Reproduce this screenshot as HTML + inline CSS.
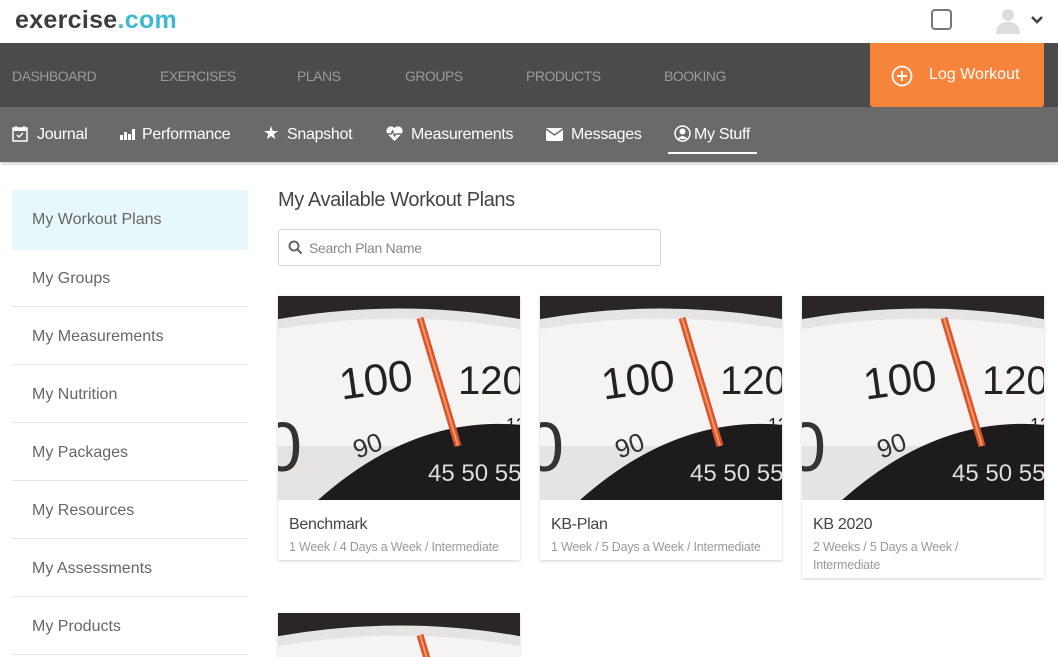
<!DOCTYPE html>
<html style="overflow:hidden;height:657px"><head><meta charset="utf-8"><style>
*{margin:0;padding:0;box-sizing:border-box}
body{width:1058px;height:657px;overflow:hidden;background:#fff;font-family:"Liberation Sans",sans-serif;position:relative}
.abs{position:absolute}
.logo{left:15px;top:6px;font-size:25px;font-weight:bold;color:#3d3d3d;letter-spacing:0.3px}
.logo span{color:#3fb8d4}
.nav{left:0;top:43px;width:1058px;height:64px;background:#4b4b4b}
.nav a{position:absolute;top:25px;font-size:14px;color:#9a9a9a;letter-spacing:-0.5px}
.btn{left:870px;top:43px;width:174px;height:64px;background:#f6843a;border-radius:0 0 3px 3px;color:#fff;font-size:16px}
.sub{left:0;top:107px;width:1058px;height:55px;background:#6a6a6a;box-shadow:0 2px 3px rgba(0,0,0,.2)}
.sub div{position:absolute;top:19px;font-size:16px;color:#fff;letter-spacing:-0.3px}
.side{left:12px;width:236px;height:58px;border-bottom:1px solid #e6e6e6;font-size:16px;color:#666;padding:21px 0 0 20px}
.card{width:242px;background:#fff;box-shadow:0 1px 3px rgba(0,0,0,.18)}
.card .t{padding:11px 11px 0;font-size:16px;color:#444;letter-spacing:-0.3px}
.card .m{padding:4px 11px 0;font-size:12.5px;color:#999;line-height:18px;letter-spacing:-0.2px}
</style></head><body>
<div class="abs logo">exercise<span>.com</span></div>
<div class="abs" style="left:931px;top:9px;width:21px;height:21px;border:2px solid #777;border-radius:4px"></div>
<svg class="abs" style="left:995px;top:6px" width="26" height="28" viewBox="0 0 26 28"><circle cx="13" cy="9" r="6" fill="#ddd"/><path d="M1 28 Q1 16 13 16 Q25 16 25 28Z" fill="#ddd"/></svg>
<svg class="abs" style="left:1030px;top:15px" width="14" height="10" viewBox="0 0 14 10"><path d="M2 2 L7 7 L12 2" stroke="#444" stroke-width="2.6" fill="none"/></svg>
<div class="abs nav">
<a style="left:12px">DASHBOARD</a><a style="left:160px">EXERCISES</a><a style="left:297px">PLANS</a><a style="left:405px">GROUPS</a><a style="left:526px">PRODUCTS</a><a style="left:664px">BOOKING</a>
</div>
<div class="abs sub">
<svg class="abs" style="left:12px;top:18px" width="16" height="17" viewBox="0 0 16 17"><rect x="1" y="3" width="14" height="13" fill="none" stroke="#fff" stroke-width="1.5"/><rect x="1" y="3" width="14" height="3" fill="#fff"/><path d="M4 1v4M12 1v4" stroke="#fff" stroke-width="1.5"/><path d="M5 10l2 2 4-4" stroke="#fff" stroke-width="1.4" fill="none"/></svg>
<div style="left:37px">Journal</div>
<svg class="abs" style="left:120px;top:22px" width="15" height="11" viewBox="0 0 15 11"><rect x="0" y="6" width="3" height="5" fill="#fff"/><rect x="4" y="3" width="3" height="8" fill="#fff"/><rect x="8" y="5" width="3" height="6" fill="#fff"/><rect x="12" y="0" width="3" height="11" fill="#fff"/></svg>
<div style="left:142px">Performance</div>
<div style="left:263px;top:16px;font-size:18px">★</div>
<div style="left:287px">Snapshot</div>
<svg class="abs" style="left:386px;top:19px" width="17" height="15" viewBox="0 0 17 15"><path d="M8.5 15 L1.5 8 A4 4 0 0 1 8.5 2 A4 4 0 0 1 15.5 8Z" fill="#fff"/><path d="M1 8h4l1.5-3 2 5 1.5-2h6" stroke="#6a6a6a" stroke-width="1.4" fill="none"/></svg>
<div style="left:411px">Measurements</div>
<svg class="abs" style="left:546px;top:21px" width="17" height="13" viewBox="0 0 17 13"><rect x="0" y="0" width="17" height="13" rx="1.5" fill="#fff"/><path d="M0 1l8.5 6 8.5-6" stroke="#6a6a6a" stroke-width="1.4" fill="none"/></svg>
<div style="left:571px">Messages</div>
<svg class="abs" style="left:674px;top:18px" width="17" height="17" viewBox="0 0 17 17"><circle cx="8.5" cy="8.5" r="7.5" fill="none" stroke="#fff" stroke-width="1.5"/><circle cx="8.5" cy="6.5" r="3" fill="#fff"/><path d="M3.5 14 Q8.5 8 13.5 14" fill="#fff"/></svg>
<div style="left:694px">My Stuff</div>
<div class="abs" style="left:668px;top:45px;width:89px;height:2px;background:#fff"></div>
</div>
<div class="abs btn"><svg class="abs" style="left:21px;top:22px" width="22" height="22" viewBox="0 0 22 22"><circle cx="11" cy="11" r="9.5" fill="none" stroke="#fff" stroke-width="1.8"/><path d="M11 6v10M6 11h10" stroke="#fff" stroke-width="2"/></svg><span class="abs" style="left:59px;top:23px">Log Workout</span></div>

<div class="abs side" style="top:190px;background:#e7f8fc;border-bottom:none;height:60px;padding-top:21px">My Workout Plans</div>
<div class="abs side" style="top:249px">My Groups</div>
<div class="abs side" style="top:307px">My Measurements</div>
<div class="abs side" style="top:365px">My Nutrition</div>
<div class="abs side" style="top:423px">My Packages</div>
<div class="abs side" style="top:481px">My Resources</div>
<div class="abs side" style="top:539px">My Assessments</div>
<div class="abs side" style="top:597px">My Products</div>

<div class="abs" style="left:278px;top:189px;font-size:20px;color:#444;letter-spacing:-0.4px">My Available Workout Plans</div>
<div class="abs" style="left:278px;top:229px;width:383px;height:37px;border:1px solid #d6d6d6;border-radius:3px">
<svg class="abs" style="left:9px;top:10px" width="15" height="15" viewBox="0 0 15 15"><circle cx="6" cy="6" r="4.5" fill="none" stroke="#666" stroke-width="2"/><path d="M9.5 9.5l4 4" stroke="#666" stroke-width="2.2"/></svg>
<span class="abs" style="left:30px;top:10px;font-size:14px;color:#888;letter-spacing:-0.3px">Search Plan Name</span></div>

<svg width="0" height="0" style="position:absolute"><defs><g id="sc">
<rect width="242" height="204" fill="#2a2628"/>
<path d="M-10 25 Q121 0 252 25 L252 204 L-10 204Z" fill="#e6e4e3"/>
<path d="M-10 35 Q121 10 252 35 L252 150 L-10 150Z" fill="#f6f4f3"/>
<path d="M40 204 Q140 115 252 130 L252 204Z" fill="#1e1b1d"/>
<text x="62" y="100" font-family="Liberation Sans" font-size="44" fill="#222" transform="rotate(-8 90 90)">100</text>
<text x="180" y="98" font-family="Liberation Sans" font-size="40" fill="#222">120</text>
<text x="-15" y="175" font-family="Liberation Sans" font-size="70" fill="#333">0</text>
<text x="75" y="160" font-family="Liberation Sans" font-size="26" fill="#333" transform="rotate(-20 85 150)">90</text>
<text x="150" y="185" font-family="Liberation Sans" font-size="24" fill="#ddd">45 50 55</text>
<text x="228" y="135" font-family="Liberation Sans" font-size="18" fill="#222">13</text>
<path d="M142 22 L180 150" stroke="#d9552a" stroke-width="7"/>
<path d="M142 22 L180 150" stroke="#f39a6a" stroke-width="2"/>
</g></defs></svg>

<div class="abs card" style="left:278px;top:296px;height:264px"><svg width="242" height="204"><use href="#sc"/></svg><div class="t">Benchmark</div><div class="m">1 Week / 4 Days a Week / Intermediate</div></div>
<div class="abs card" style="left:540px;top:296px;height:264px"><svg width="242" height="204"><use href="#sc"/></svg><div class="t">KB-Plan</div><div class="m">1 Week / 5 Days a Week / Intermediate</div></div>
<div class="abs card" style="left:802px;top:296px;height:282px"><svg width="242" height="204"><use href="#sc"/></svg><div class="t">KB 2020</div><div class="m">2 Weeks / 5 Days a Week /<br>Intermediate</div></div>
<div class="abs card" style="left:278px;top:613px;height:44px;overflow:hidden"><svg width="242" height="204"><use href="#sc"/></svg></div>
</body></html>
